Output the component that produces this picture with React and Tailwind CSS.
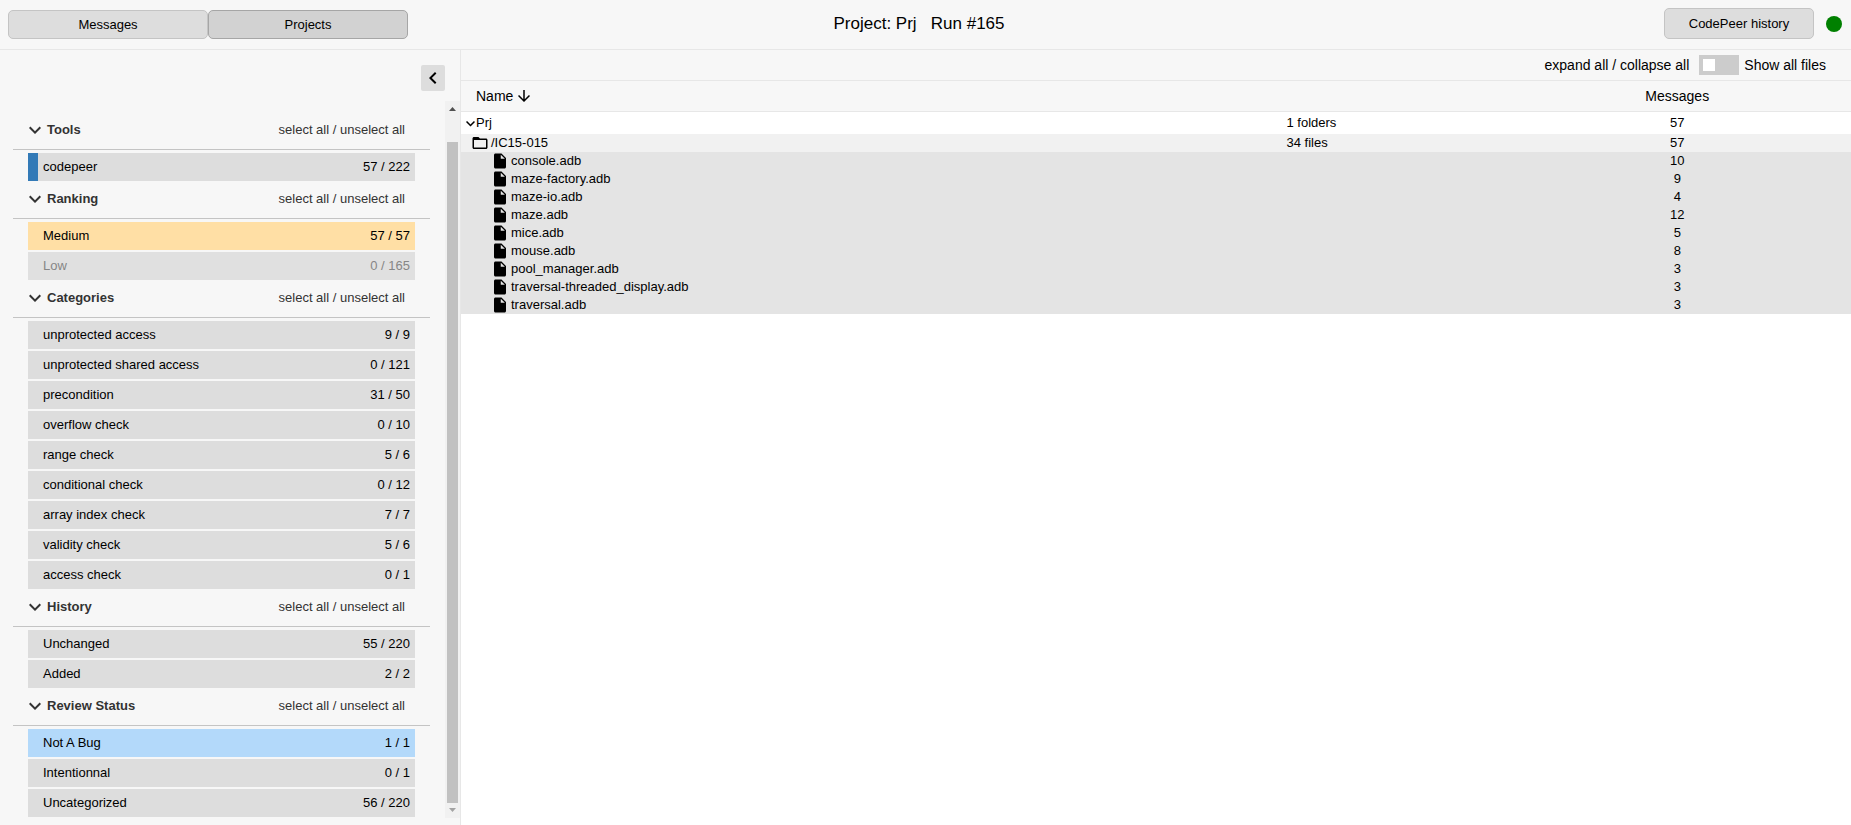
import { useState } from 'react';
import clsx from 'clsx';
import { MdArrowDownward, MdChevronLeft, MdExpandMore, MdFolderOpen, MdInsertDriveFile } from 'react-icons/md';

const filters = [
    {
        title: 'Tools',
        items: [{ name: 'codepeer', count: '57 / 222', bar: true }],
    },
    {
        title: 'Ranking',
        items: [
            { name: 'Medium', count: '57 / 57', color: 'bg-[#ffdfa5]' },
            { name: 'Low', count: '0 / 165', color: 'bg-[#e0e0e0] text-[#868686]' },
        ],
    },
    {
        title: 'Categories',
        items: [
            { name: 'unprotected access', count: '9 / 9' },
            { name: 'unprotected shared access', count: '0 / 121' },
            { name: 'precondition', count: '31 / 50' },
            { name: 'overflow check', count: '0 / 10' },
            { name: 'range check', count: '5 / 6' },
            { name: 'conditional check', count: '0 / 12' },
            { name: 'array index check', count: '7 / 7' },
            { name: 'validity check', count: '5 / 6' },
            { name: 'access check', count: '0 / 1' },
        ],
    },
    {
        title: 'History',
        items: [
            { name: 'Unchanged', count: '55 / 220' },
            { name: 'Added', count: '2 / 2' },
        ],
    },
    {
        title: 'Review Status',
        items: [
            { name: 'Not A Bug', count: '1 / 1', color: 'bg-[#b3d9fa]' },
            { name: 'Intentionnal', count: '0 / 1' },
            { name: 'Uncategorized', count: '56 / 220' },
        ],
    },
];

const files = [
    { name: 'console.adb', messages: 10 },
    { name: 'maze-factory.adb', messages: 9 },
    { name: 'maze-io.adb', messages: 4 },
    { name: 'maze.adb', messages: 12 },
    { name: 'mice.adb', messages: 5 },
    { name: 'mouse.adb', messages: 8 },
    { name: 'pool_manager.adb', messages: 3 },
    { name: 'traversal-threaded_display.adb', messages: 3 },
    { name: 'traversal.adb', messages: 3 },
];

function Header() {
    return (
        <header className="grid h-[50px] grid-cols-3 items-center border-b border-[#e7e7e7] pr-[9px] pl-2">
            <nav className="flex">
                <button className="h-[29px] w-[200px] rounded-[5px] border border-[#c4c4c4] bg-[#ddd]">Messages</button>
                <button className="h-[29px] w-[200px] rounded-[5px] border border-[#a6a6a6] bg-[#d2d2d2]">Projects</button>
            </nav>
            <h1 className="pr-3 pb-[2px] text-center text-[17px] leading-6">Project: Prj &nbsp; Run #165</h1>
            <div className="flex items-center justify-end gap-3 pb-[2px]">
                <button className="h-[31px] w-[150px] rounded-[5px] border border-[#c4c4c4] bg-[#ddd]">CodePeer history</button>
                <span className="size-4 rounded-full bg-[#008000]" />
            </div>
        </header>
    );
}

function FilterGroup({ title, items }) {
    const [open, setOpen] = useState(true);

    return (
        <section>
            <div className="flex h-[38px] items-start justify-between border-b border-[#c4c4c4] pt-[6px] pr-[25px] pl-[10px] leading-6 text-[#333]">
                <button className="flex items-center font-bold" onClick={() => setOpen(!open)}>
                    <MdExpandMore className="size-6" />
                    {title}
                </button>
                <div>
                    <button>select all</button> / <button>unselect all</button>
                </div>
            </div>
            {open && (
                <ul className="flex flex-col gap-[2px] pt-[3px] pr-[15px] pl-[15px]">
                    {items.map((item) => (
                        <li key={item.name}>
                            <button className={clsx('flex h-7 w-full items-center pr-[5px]', item.color || 'bg-[#ddd]')}>
                                <span className={clsx('mr-[5px] h-full w-[10px]', item.bar && 'bg-[#337ab7]')} />
                                <span>{item.name}</span>
                                <span className="ml-auto">{item.count}</span>
                            </button>
                        </li>
                    ))}
                </ul>
            )}
        </section>
    );
}

function ScrollBar() {
    return (
        <div className="flex w-[15px] shrink-0 flex-col items-center bg-[#f1f1f1]" aria-hidden="true">
            <svg viewBox="0 0 15 15" className="size-[15px]">
                <path d="M4 10h7L7.500 6z" fill="#505050" />
            </svg>
            <div className="mt-[26px] w-[11px] flex-1 bg-[#c1c1c1]" />
            <svg viewBox="0 0 15 15" className="size-[15px]">
                <path d="M4 5h7L7.500 9z" fill="#a3a3a3" />
            </svg>
        </div>
    );
}

function Sidebar() {
    return (
        <aside className="flex w-[461px] shrink-0 flex-col border-r border-[#e7e7e7] pb-[7px]">
            <div className="flex justify-end pt-[15px] pr-[15px] pb-[10px]">
                <button className="flex h-[26px] w-6 items-center justify-center rounded-[2px] bg-[#ddd]" aria-label="Hide filters">
                    <MdChevronLeft className="size-6" />
                </button>
            </div>
            <div className="flex flex-1">
                <div className="flex-1 pt-[11px] pr-[15px] pl-[13px]">
                    {filters.map((group) => (
                        <FilterGroup key={group.title} {...group} />
                    ))}
                </div>
                <ScrollBar />
            </div>
        </aside>
    );
}

function ProjectTable() {
    return (
        <table className="w-full table-fixed border-separate border-spacing-0 text-left">
            <colgroup>
                <col />
                <col className="w-[217px]" />
                <col className="w-1/4" />
            </colgroup>
            <thead className="bg-[#f7f7f7] text-sm">
                <tr className="h-[31px]">
                    <th className="border-b border-[#e7e7e7] p-0 pl-[15px] font-normal">
                        <button className="flex items-center gap-[2px]">
                            Name
                            <MdArrowDownward className="size-[18px]" />
                        </button>
                    </th>
                    <th className="border-b border-[#e7e7e7] p-0" />
                    <th className="border-b border-[#e7e7e7] p-0 text-center font-normal">Messages</th>
                </tr>
            </thead>
            <tbody className="leading-[18px]">
                <tr className="h-[22px]">
                    <td className="p-0 pl-[5px]">
                        <button className="flex items-center">
                            <svg viewBox="6 6 12 12" className="mr-px size-[9px]">
                                <path d="M16.590 8.590 12 13.170 7.410 8.590 6 10l6 6 6-6z" />
                            </svg>
                            Prj
                        </button>
                    </td>
                    <td className="p-0">1 folders</td>
                    <td className="p-0 text-center">57</td>
                </tr>
                <tr className="bg-[#f1f1f1]">
                    <td className="p-0 pl-[10px]">
                        <div className="flex items-center gap-[2px]">
                            <MdFolderOpen className="size-[18px]" />
                            /IC15-015
                        </div>
                    </td>
                    <td className="p-0">34 files</td>
                    <td className="p-0 text-center">57</td>
                </tr>
                {files.map((file) => (
                    <tr key={file.name} className="bg-[#e4e4e4]">
                        <td className="p-0 pl-[30px]">
                            <a href="#" className="flex items-center gap-[2px]">
                                <MdInsertDriveFile className="size-[18px]" />
                                {file.name}
                            </a>
                        </td>
                        <td className="p-0" />
                        <td className="p-0 text-center">{file.messages}</td>
                    </tr>
                ))}
            </tbody>
        </table>
    );
}

export default function App() {
    const [showAll, setShowAll] = useState(false);

    return (
        <div className="flex min-h-screen flex-col bg-[#f7f7f7] font-['Liberation_Sans',Arial,sans-serif] text-[13px] leading-5 text-black">
            <Header />
            <div className="flex flex-1">
                <Sidebar />
                <main className="min-w-0 flex-1 bg-white">
                    <div className="flex h-[31px] items-center justify-end border-b border-[#e7e7e7] bg-[#f7f7f7] pr-[25px] text-sm">
                        <div>
                            <button>expand all</button> / <button>collapse all</button>
                        </div>
                        <label className="ml-[10px] flex items-center gap-[5px]">
                            <input
                                type="checkbox"
                                checked={showAll}
                                onChange={(e) => setShowAll(e.target.checked)}
                                className="flex h-5 w-10 appearance-none items-center bg-[#ccc] px-1 before:size-3 before:bg-white checked:justify-end checked:bg-[#337ab7]"
                            />
                            Show all files
                        </label>
                    </div>
                    <ProjectTable />
                </main>
            </div>
        </div>
    );
}
